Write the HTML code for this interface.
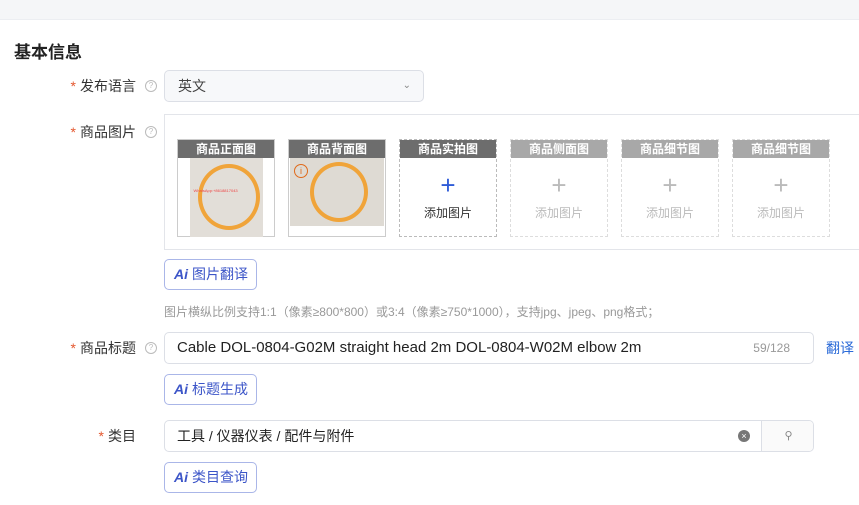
<!DOCTYPE html>
<html><head><meta charset="utf-8"><style>
body{margin:0;width:859px;height:505px;background:#fff;font-family:"Liberation Sans","Noto Sans CJK SC",sans-serif;position:relative;overflow:hidden;color:#333}
.a{position:absolute}
.top{left:0;top:0;width:859px;height:19px;background:#f5f6f8;border-bottom:1px solid #eceef2}
.lbl{font-size:14px;color:#333;text-align:right;width:120px;left:16px}
.lbl b{color:#e4572e;font-weight:normal;margin-right:4px}
.q{width:10px;height:10px;border:1px solid #bbb;border-radius:50%;font-size:8px;color:#bbb;text-align:center;line-height:10px}
.inp{border:1px solid #dcdfe6;border-radius:5px;background:#fff;box-sizing:border-box}
.btn{border:1px solid #aab6e8;border-radius:5px;width:93px;height:31px;box-sizing:border-box;font-size:14px;color:#3c55c8;line-height:29px;padding-left:9px}
.btn i{font-style:italic;font-weight:bold;color:#3c55c8;margin-right:4px;font-size:14px}
.card{width:98px;height:98px;box-sizing:border-box;top:139px;text-align:center}
.card .h{height:18px;line-height:18px;font-size:12px;color:#fff;font-weight:bold}
.dash{border:1px dashed #bbb}
.plus{font-size:26px;line-height:26px;margin-top:14px;font-weight:300}
.add{font-size:12px;margin-top:6px}
</style></head><body>
<div class="a top"></div>
<div class="a" style="left:14px;top:38px;font-size:17px;font-weight:bold;color:#222">基本信息</div>

<div class="a lbl" style="top:76px"><b>*</b>发布语言</div>
<div class="a q" style="left:145px;top:80px">?</div>
<div class="a inp" style="left:164px;top:70px;width:260px;height:32px;background:#f7f8fa;font-size:14px;line-height:30px;padding-left:13px;color:#444">英文<span class="a" style="right:12px;top:0;font-size:10px;color:#888">⌄</span></div>

<div class="a lbl" style="top:122px"><b>*</b>商品图片</div>
<div class="a q" style="left:145px;top:126px">?</div>
<div class="a" style="left:164px;top:114px;width:700px;height:136px;border:1px solid #e3e5ea;box-sizing:border-box"></div>

<div class="a card" style="left:177px;border:1px solid #ccc"><div class="h" style="background:#6d6d6d">商品正面图</div>
<div style="margin:0 auto;width:73px;height:79px;background:#e2ded8;position:relative"><div style="position:absolute;left:8px;top:6px;width:54px;height:58px;border:4px solid #f0a43a;border-radius:50%"></div><div style="position:absolute;left:4px;top:30px;font-size:4px;color:#e44">WhatsApp:+8618817043</div></div></div>
<div class="a card" style="left:288px;border:1px solid #ccc"><div class="h" style="background:#6d6d6d">商品背面图</div>
<div style="margin:0 1px;height:68px;background:#dedad3;position:relative"><div style="position:absolute;left:20px;top:4px;width:50px;height:52px;border:4px solid #f0a43a;border-radius:50%"></div><div style="position:absolute;left:4px;top:6px;width:12px;height:12px;border:1px solid #e06a1a;border-radius:50%;font-size:9px;color:#e06a1a;line-height:12px">i</div></div></div>
<div class="a card dash" style="left:399px"><div class="h" style="background:#6d6d6d">商品实拍图</div><div class="plus" style="color:#2f5cd8">+</div><div class="add" style="color:#333">添加图片</div></div>
<div class="a card dash" style="left:510px;border-color:#ddd"><div class="h" style="background:#a8a8a8">商品侧面图</div><div class="plus" style="color:#bbb">+</div><div class="add" style="color:#bbb">添加图片</div></div>
<div class="a card dash" style="left:621px;border-color:#ddd"><div class="h" style="background:#a8a8a8">商品细节图</div><div class="plus" style="color:#bbb">+</div><div class="add" style="color:#bbb">添加图片</div></div>
<div class="a card dash" style="left:732px;border-color:#ddd"><div class="h" style="background:#a8a8a8">商品细节图</div><div class="plus" style="color:#bbb">+</div><div class="add" style="color:#bbb">添加图片</div></div>

<div class="a btn" style="left:164px;top:259px"><i>Ai</i>图片翻译</div>
<div class="a" style="left:164px;top:303px;font-size:12px;color:#999">图片横纵比例支持1:1（像素≥800*800）或3:4（像素≥750*1000），支持jpg、jpeg、png格式；</div>

<div class="a lbl" style="top:338px"><b>*</b>商品标题</div>
<div class="a q" style="left:145px;top:342px">?</div>
<div class="a inp" style="left:164px;top:332px;width:650px;height:32px;font-size:15px;line-height:30px;padding-left:12px;color:#222">Cable DOL-0804-G02M straight head 2m DOL-0804-W02M elbow 2m<span class="a" style="right:23px;top:0;font-size:12px;color:#999">59/128</span></div>
<div class="a" style="left:826px;top:338px;font-size:14px;color:#2a6ad8">翻译</div>
<div class="a btn" style="left:164px;top:374px"><i>Ai</i>标题生成</div>

<div class="a lbl" style="top:426px"><b>*</b>类目</div>
<div class="a inp" style="left:164px;top:420px;width:650px;height:32px;font-size:14px;line-height:30px;padding-left:12px;color:#222;overflow:hidden">工具 / 仪器仪表 / 配件与附件
<span class="a" style="left:573px;top:9px;width:12px;height:12px;border-radius:50%;background:#777;color:#fff;font-size:9px;line-height:12px;text-align:center">×</span>
<span class="a" style="left:596px;top:0;width:53px;height:30px;border-left:1px solid #dcdfe6;background:#fafafa;text-align:center;font-size:11px;color:#888">⚲</span></div>
<div class="a btn" style="left:164px;top:462px"><i>Ai</i>类目查询</div>
</body></html>
